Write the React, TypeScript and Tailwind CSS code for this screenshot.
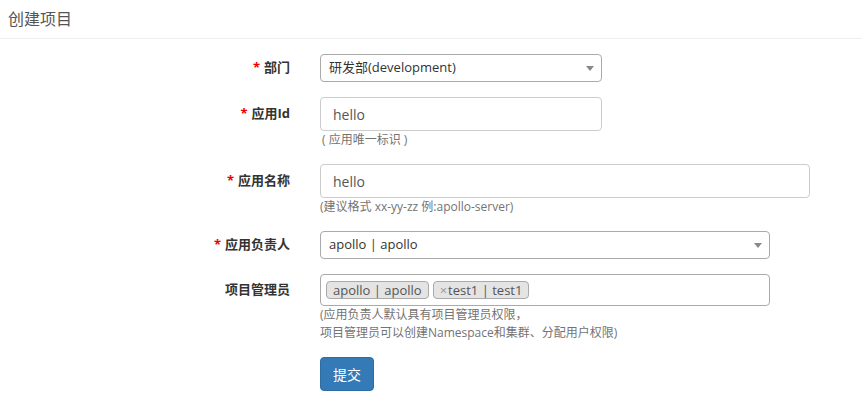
import React from 'react'

const font = { fontFamily: '"Open Sans", "Noto Sans CJK SC", sans-serif' }

function Label({ text, required, h }: { text: string; required?: boolean; h: string }) {
  return (
    <div className={`w-[290px] shrink-0 flex items-center justify-end text-[13px] font-bold text-[#333] ${h}`}>
      {required && <span className="text-[#e00] mr-1">*</span>}
      {text}
    </div>
  )
}

function Arrow() {
  return (
    <svg width="8" height="5" viewBox="0 0 8 5" className="shrink-0">
      <path d="M0 0 L8 0 L4 5 Z" fill="#888" />
    </svg>
  )
}

function Tag({ text, remove }: { text: string; remove?: boolean }) {
  return (
    <span className="h-[18px] flex items-center px-[6px] bg-[#e4e4e4] border border-[#aaa] rounded-[4px] text-[13px] text-[#555] leading-none">
      {remove && <span className="text-[#999] mr-[1px]">×</span>}
      {text}
    </span>
  )
}

export default function App() {
  return (
    <div className="w-[862px] h-[409px] bg-white overflow-hidden" style={font}>
      {/* Header */}
      <div className="h-[39px] border-b border-[#eee] px-2 flex items-center text-[16px] text-[#555]">
        创建项目
      </div>

      <div className="pt-[15px]">
        {/* 部门 */}
        <div className="flex mb-[15px]">
          <Label text="部门" required h="h-[28px]" />
          <div className="ml-[30px] w-[282px] h-[28px] border border-[#aaa] rounded-[4px] flex items-center justify-between pl-2 pr-[7px] text-[13px] text-[#333]">
            <span>研发部(development)</span>
            <Arrow />
          </div>
        </div>

        {/* 应用Id */}
        <div className="flex mb-[15px]">
          <Label text="应用Id" required h="h-[34px]" />
          <div className="ml-[30px]">
            <div className="w-[282px] h-[34px] border border-[#ccc] rounded-[4px] flex items-center px-3 text-[14px] text-[#555]">
              hello
            </div>
            <div className="text-[12px] leading-[18px] text-[#737373] pl-[2px]">( 应用唯一标识 )</div>
          </div>
        </div>

        {/* 应用名称 */}
        <div className="flex mb-[15px]">
          <Label text="应用名称" required h="h-[34px]" />
          <div className="ml-[30px]">
            <div className="w-[490px] h-[34px] border border-[#ccc] rounded-[4px] flex items-center px-3 text-[14px] text-[#555]">
              hello
            </div>
            <div className="text-[12px] leading-[18px] text-[#737373]">(建议格式 xx-yy-zz 例:apollo-server)</div>
          </div>
        </div>

        {/* 应用负责人 */}
        <div className="flex mb-[15px]">
          <Label text="应用负责人" required h="h-[28px]" />
          <div className="ml-[30px] w-[450px] h-[28px] border border-[#aaa] rounded-[4px] flex items-center justify-between pl-2 pr-[7px] text-[13px] text-[#333]">
            <span>apollo | apollo</span>
            <Arrow />
          </div>
        </div>

        {/* 项目管理员 */}
        <div className="flex mb-[15px]">
          <Label text="项目管理员" h="h-[32px]" />
          <div className="ml-[30px]">
            <div className="w-[450px] h-[32px] border border-[#aaa] rounded-[4px] flex items-center gap-[4px] px-[5px]">
              <Tag text="apollo | apollo" />
              <Tag text="test1 | test1" remove />
            </div>
            <div className="text-[12px] leading-[18px] text-[#737373]">
              <div>(应用负责人默认具有项目管理员权限，</div>
              <div>项目管理员可以创建Namespace和集群、分配用户权限)</div>
            </div>
          </div>
        </div>

        {/* Submit */}
        <div className="flex">
          <div className="w-[290px] shrink-0" />
          <button className="ml-[30px] w-[54px] h-[34px] bg-[#337ab7] border border-[#2e6da4] rounded-[4px] text-white text-[14px]">
            提交
          </button>
        </div>
      </div>
    </div>
  )
}
